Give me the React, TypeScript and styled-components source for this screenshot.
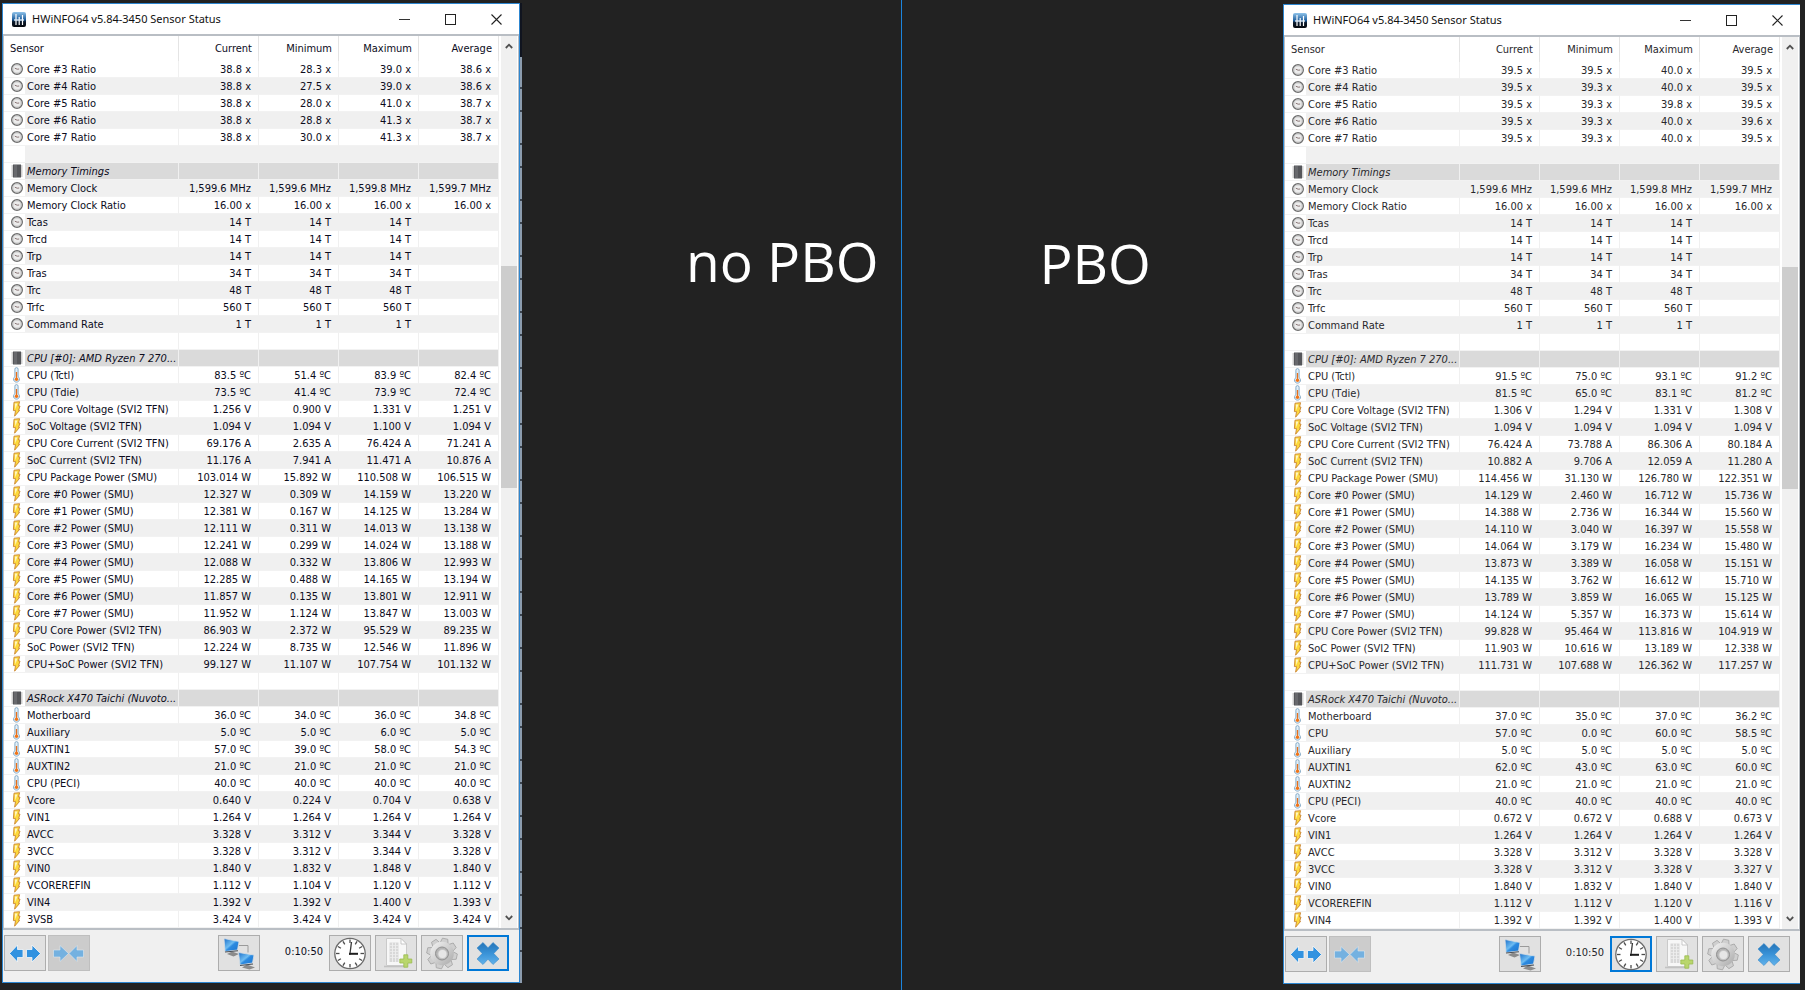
import React from 'react';
import styled, { createGlobalStyle, css } from 'styled-components';

const GlobalStyle = createGlobalStyle`
  *, *::before, *::after { box-sizing: border-box; }
  body { margin: 0; background: #222222; }
`;

/* ---------- data ---------- */

type Kind = 'clock' | 'temp' | 'volt';
type Row =
  | { type: 'blank' }
  | { type: 'section'; name: string }
  | { type: 'item'; kind: Kind; name: string; values: string[] };

const blank: Row = { type: 'blank' };
const section = (name: string): Row => ({ type: 'section', name });

/* Each line reads: name | current | minimum | maximum | average */
const items = (kind: Kind, unit: string, lines: string[]): Row[] =>
  lines.map((line) => {
    const [name, ...values] = line.split('|');
    return { type: 'item', kind, name, values: values.map((v) => (v ? `${v} ${unit}` : '')) };
  });

const timings: Row[] = items('clock', 'T', [
  'Tcas|14|14|14|',
  'Trcd|14|14|14|',
  'Trp|14|14|14|',
  'Tras|34|34|34|',
  'Trc|48|48|48|',
  'Trfc|560|560|560|',
  'Command Rate|1|1|1|',
]);

const memory: Row[] = [
  blank,
  section('Memory Timings'),
  ...items('clock', 'MHz', ['Memory Clock|1,599.6|1,599.6|1,599.8|1,599.7']),
  ...items('clock', 'x', ['Memory Clock Ratio|16.00|16.00|16.00|16.00']),
  ...timings,
  blank,
  section('CPU [#0]: AMD Ryzen 7 270...'),
];

const stockRows: Row[] = [
  ...items('clock', 'x', [
    'Core #3 Ratio|38.8|28.3|39.0|38.6',
    'Core #4 Ratio|38.8|27.5|39.0|38.6',
    'Core #5 Ratio|38.8|28.0|41.0|38.7',
    'Core #6 Ratio|38.8|28.8|41.3|38.7',
    'Core #7 Ratio|38.8|30.0|41.3|38.7',
  ]),
  ...memory,
  ...items('temp', 'ºC', ['CPU (Tctl)|83.5|51.4|83.9|82.4', 'CPU (Tdie)|73.5|41.4|73.9|72.4']),
  ...items('volt', 'V', [
    'CPU Core Voltage (SVI2 TFN)|1.256|0.900|1.331|1.251',
    'SoC Voltage (SVI2 TFN)|1.094|1.094|1.100|1.094',
  ]),
  ...items('volt', 'A', [
    'CPU Core Current (SVI2 TFN)|69.176|2.635|76.424|71.241',
    'SoC Current (SVI2 TFN)|11.176|7.941|11.471|10.876',
  ]),
  ...items('volt', 'W', [
    'CPU Package Power (SMU)|103.014|15.892|110.508|106.515',
    'Core #0 Power (SMU)|12.327|0.309|14.159|13.220',
    'Core #1 Power (SMU)|12.381|0.167|14.125|13.284',
    'Core #2 Power (SMU)|12.111|0.311|14.013|13.138',
    'Core #3 Power (SMU)|12.241|0.299|14.024|13.188',
    'Core #4 Power (SMU)|12.088|0.332|13.806|12.993',
    'Core #5 Power (SMU)|12.285|0.488|14.165|13.194',
    'Core #6 Power (SMU)|11.857|0.135|13.801|12.911',
    'Core #7 Power (SMU)|11.952|1.124|13.847|13.003',
    'CPU Core Power (SVI2 TFN)|86.903|2.372|95.529|89.235',
    'SoC Power (SVI2 TFN)|12.224|8.735|12.546|11.896',
    'CPU+SoC Power (SVI2 TFN)|99.127|11.107|107.754|101.132',
  ]),
  blank,
  section('ASRock X470 Taichi (Nuvoto...'),
  ...items('temp', 'ºC', [
    'Motherboard|36.0|34.0|36.0|34.8',
    'Auxiliary|5.0|5.0|6.0|5.0',
    'AUXTIN1|57.0|39.0|58.0|54.3',
    'AUXTIN2|21.0|21.0|21.0|21.0',
    'CPU (PECI)|40.0|40.0|40.0|40.0',
  ]),
  ...items('volt', 'V', [
    'Vcore|0.640|0.224|0.704|0.638',
    'VIN1|1.264|1.264|1.264|1.264',
    'AVCC|3.328|3.312|3.344|3.328',
    '3VCC|3.328|3.312|3.344|3.328',
    'VIN0|1.840|1.832|1.848|1.840',
    'VCOREREFIN|1.112|1.104|1.120|1.112',
    'VIN4|1.392|1.392|1.400|1.393',
    '3VSB|3.424|3.424|3.424|3.424',
  ]),
];

const boostRows: Row[] = [
  ...items('clock', 'x', [
    'Core #3 Ratio|39.5|39.5|40.0|39.5',
    'Core #4 Ratio|39.5|39.3|40.0|39.5',
    'Core #5 Ratio|39.5|39.3|39.8|39.5',
    'Core #6 Ratio|39.5|39.3|40.0|39.6',
    'Core #7 Ratio|39.5|39.3|40.0|39.5',
  ]),
  ...memory,
  ...items('temp', 'ºC', ['CPU (Tctl)|91.5|75.0|93.1|91.2', 'CPU (Tdie)|81.5|65.0|83.1|81.2']),
  ...items('volt', 'V', [
    'CPU Core Voltage (SVI2 TFN)|1.306|1.294|1.331|1.308',
    'SoC Voltage (SVI2 TFN)|1.094|1.094|1.094|1.094',
  ]),
  ...items('volt', 'A', [
    'CPU Core Current (SVI2 TFN)|76.424|73.788|86.306|80.184',
    'SoC Current (SVI2 TFN)|10.882|9.706|12.059|11.280',
  ]),
  ...items('volt', 'W', [
    'CPU Package Power (SMU)|114.456|31.130|126.780|122.351',
    'Core #0 Power (SMU)|14.129|2.460|16.712|15.736',
    'Core #1 Power (SMU)|14.388|2.736|16.344|15.560',
    'Core #2 Power (SMU)|14.110|3.040|16.397|15.558',
    'Core #3 Power (SMU)|14.064|3.179|16.234|15.480',
    'Core #4 Power (SMU)|13.873|3.389|16.058|15.151',
    'Core #5 Power (SMU)|14.135|3.762|16.612|15.710',
    'Core #6 Power (SMU)|13.789|3.859|16.065|15.125',
    'Core #7 Power (SMU)|14.124|5.357|16.373|15.614',
    'CPU Core Power (SVI2 TFN)|99.828|95.464|113.816|104.919',
    'SoC Power (SVI2 TFN)|11.903|10.616|13.189|12.338',
    'CPU+SoC Power (SVI2 TFN)|111.731|107.688|126.362|117.257',
  ]),
  blank,
  section('ASRock X470 Taichi (Nuvoto...'),
  ...items('temp', 'ºC', [
    'Motherboard|37.0|35.0|37.0|36.2',
    'CPU|57.0|0.0|60.0|58.5',
    'Auxiliary|5.0|5.0|5.0|5.0',
    'AUXTIN1|62.0|43.0|63.0|60.0',
    'AUXTIN2|21.0|21.0|21.0|21.0',
    'CPU (PECI)|40.0|40.0|40.0|40.0',
  ]),
  ...items('volt', 'V', [
    'Vcore|0.672|0.672|0.688|0.673',
    'VIN1|1.264|1.264|1.264|1.264',
    'AVCC|3.328|3.312|3.328|3.328',
    '3VCC|3.328|3.312|3.328|3.327',
    'VIN0|1.840|1.832|1.840|1.840',
    'VCOREREFIN|1.112|1.112|1.120|1.116',
    'VIN4|1.392|1.392|1.400|1.393',
  ]),
];

/* ---------- styled parts ---------- */

const Desktop = styled.main`
  display: flex;
  min-height: 100vh;
`;

const Half = styled.section<{ $side: 'left' | 'right' }>`
  flex: 1 1 0;
  display: flex;
  align-items: flex-start;
  ${(p) =>
    p.$side === 'left'
      ? css`padding: 3px 0 6px 2px;`
      : css`padding: 4px 5px 6px 0; border-left: 1px solid #1c84dc;`}
`;

const Caption = styled.h1<{ $side: 'left' | 'right' }>`
  flex: 1;
  margin: 0;
  font: 400 55px/74px 'Open Sans', 'Noto Sans', sans-serif;
  color: #ffffff;
  white-space: nowrap;
  ${(p) =>
    p.$side === 'left'
      ? css`text-align: right; padding: 221px 22px 0 0;`
      : css`text-align: left; padding: 222px 0 0 138px;`}
`;

const Crop = styled.div`
  flex: 0 0 517px;
  overflow: hidden;
`;

const Backdrop = styled.div`
  align-self: stretch;
  width: 2px;
  margin-bottom: 1px;
  display: flex;
  flex-direction: column;
  background: repeating-linear-gradient(#8c9cae 0 28px, #3a4450 28px 30px, #8c9cae 30px 51px, #3a4450 51px 53px, #8c9cae 53px 56px);
  &::before {
    content: '';
    height: 54px;
    background: #10141f;
  }
`;

const Frame = styled.article<{ $soft: boolean }>`
  width: 518px;
  background: #f0f0f0;
  border: 1px solid #2d86d0;
  font: 11px/16px 'DejaVu Sans Condensed', 'DejaVu Sans', sans-serif;
  color: ${(p) => (p.$soft ? '#28282c' : '#0c0c1c')};
  flex: none;
`;

const TitleBar = styled.header`
  display: flex;
  align-items: center;
  height: 30px;
  padding-left: 9px;
  background: #ffffff;
`;

const Title = styled.h2`
  flex: 1;
  margin: 0 0 0 6px;
  font: 400 11px/16px 'Noto Sans', 'Open Sans', sans-serif;
  color: #111111;
`;

const WindowButton = styled.button`
  width: 46px;
  height: 30px;
  padding: 0;
  border: 0;
  background: transparent;
  display: flex;
  align-items: center;
  justify-content: center;
`;

const List = styled.div`
  display: flex;
  background: #ffffff;
  border: solid #b9bec4;
  border-width: 2px 1px;
`;

const Grid = styled.table`
  flex: 1;
  width: 100%;
  table-layout: fixed;
  border-collapse: separate;
  border-spacing: 0;
`;

const HeadCell = styled.th<{ $first?: boolean }>`
  height: 25px;
  padding: ${(p) => (p.$first ? '0 0 0 6px' : '0 6px 0 0')};
  text-align: ${(p) => (p.$first ? 'left' : 'right')};
  font-weight: 400;
  border-right: 1px solid #e4e4e4;
`;

const Line = styled.tr<{ $tone: 'plain' | 'stripe' | 'section' }>`
  height: 17px;
  background: ${(p) => ({ plain: '#ffffff', stripe: '#f0f0f0', section: '#dadada' })[p.$tone]};
  font-style: ${(p) => (p.$tone === 'section' ? 'italic' : 'normal')};
`;

const cell = css`
  height: 17px;
  border-bottom: 1px solid #f2f2f2;
  white-space: nowrap;
`;

const IconCell = styled.td`
  ${cell}
  padding: 0 0 0 7px;
  background: #ffffff;
  & > svg { display: block; }
`;

const NameCell = styled.td`
  ${cell}
  padding: 2px 0 0 2px;
  line-height: 14px;
  border-right: 1px solid #f0f0f0;
`;

const ValueCell = styled.td`
  ${cell}
  padding: 2px 7px 0 0;
  line-height: 14px;
  text-align: right;
  border-right: 1px solid #f0f0f0;
`;

const Scrollbar = styled.div`
  flex: 0 0 16px;
  margin: 0 1px 0 2px;
  display: grid;
  grid-template-rows: 20px 210fr 222fr 420fr 20px;
  background: #f0f0f0;
`;

const ScrollArrow = styled.button<{ $end?: boolean }>`
  grid-row: ${(p) => (p.$end ? 5 : 1)};
  padding: 0;
  border: 0;
  background: transparent;
  display: flex;
  align-items: center;
  justify-content: center;
`;

const Thumb = styled.div`
  grid-row: 3;
  background: #cdcdcd;
`;

const Footer = styled.footer`
  display: flex;
  align-items: center;
  height: 52px;
  padding: 0 10px 6px 1px;
`;

const Group = styled.div<{ $gap: number; $end?: boolean }>`
  display: flex;
  align-items: center;
  gap: ${(p) => p.$gap}px;
  margin-left: ${(p) => (p.$end ? 'auto' : '0')};
`;

const Timer = styled.time`
  margin: 0 6px 2px 25px;
`;

const ToolButton = styled.button<{ $active?: boolean }>`
  width: 42px;
  height: 36px;
  padding: 0;
  border: 1px solid #adadad;
  background: #e1e1e1;
  display: flex;
  align-items: center;
  justify-content: center;
  ${(p) => p.$active && css`border: 2px solid #0078d7;`}
  &:disabled { background: #cccccc; border-color: #bfbfbf; }
  & > svg { flex: none; display: block; }
`;

/* ---------- drawings ---------- */

const RowIcon = ({ kind }: { kind: Kind | 'chip' }) => {
  if (kind === 'clock')
    return (
      <svg width="13" height="16" viewBox="0 0 13 16">
        <circle cx="6" cy="8" r="5.3" fill="#ececec" stroke="#6e6e6e" strokeWidth="1.4" />
        <circle cx="6" cy="8" r="4.1" fill="none" stroke="#c4c4c4" strokeWidth="1" />
        <path d="M3.8 7.2 6.2 8.2 8.2 8" fill="none" stroke="#8a7676" strokeWidth="1" />
      </svg>
    );
  if (kind === 'chip')
    return (
      <svg width="13" height="16" viewBox="0 0 13 16">
        <path d="M0.500 3h11M0.500 5h11M0.500 7h11M0.500 9h11M0.500 11h11M0.500 13h11" stroke="#a0a0a0" strokeWidth="1" />
        <rect x="2" y="1.5" width="8" height="13" fill="#55565a" />
        <path d="M3 2h3v12H3z" fill="#68696d" />
      </svg>
    );
  if (kind === 'temp')
    return (
      <svg width="13" height="16" viewBox="0 0 13 16">
        <path d="M3.900 2.200a1.600 1.600 0 0 1 3.200 0v7.400a3 3 0 1 1-3.200 0z" fill="#e4f0f8" stroke="#86abc8" strokeWidth="1" />
        <path d="M5.500 5v6" stroke="#e8701c" strokeWidth="1.300" />
        <circle cx="5.500" cy="12.200" r="1.700" fill="#f07418" />
      </svg>
    );
  return (
    <svg width="13" height="16" viewBox="0 0 13 16">
      <path d="M3 1.2 8.600.7 7.500 5H9L7.600 9.400h1L3.600 15.200 4.500 9.600H2.400z" fill="#fcd83c" stroke="#c98432" strokeWidth="0.900" strokeLinejoin="round" />
      <path d="M3.800 2.400h2.600L4.400 8.200z" fill="#fff6c4" />
    </svg>
  );
};

const AppIcon = () => (
  <svg width="14" height="15" viewBox="0 0 14 15">
    <defs>
      <linearGradient id="appFill" x1="0" y1="0" x2="0" y2="1">
        <stop offset="0" stopColor="#8fc3ea" />
        <stop offset="0.5" stopColor="#1f5f9e" />
        <stop offset="0.65" stopColor="#0b1a2c" />
        <stop offset="1" stopColor="#05080d" />
      </linearGradient>
    </defs>
    <rect width="14" height="15" rx="2" fill="url(#appFill)" />
    <path d="M4 2v11M7.200 5v8M10.500 3v10" stroke="#ffffff" strokeWidth="1.200" />
    <path d="M2 8h10" stroke="#e6f0f8" strokeWidth="1.300" />
  </svg>
);

const Arrows = ({ inward }: { inward?: boolean }) => (
  <svg width="40" height="34" viewBox="0 0 40 34">
    {inward ? (
      <g fill="#74b1e0" stroke="#dfe8ee" strokeWidth="0.6">
        <path d="M4.500 14h6.500v-4.500l8.500 8-8.500 8V21H4.500z" />
        <path d="M34.500 14h-6.500v-4.500l-8 8 8 8V21h6.500z" />
      </g>
    ) : (
      <g fill="#3192e0" stroke="#f6f6f6" strokeWidth="0.8">
        <path d="M18 13.500h-5.500v-4.500l-8 8.500 8 8.500v-4.500H18z" />
        <path d="M21.500 13.500H27v-4.500l8.500 8.500-8.500 8.500v-4.500h-5.500z" />
      </g>
    )}
  </svg>
);

const NetworkIcon = () => (
  <svg width="40" height="34" viewBox="0 0 40 34">
    <defs>
      <linearGradient id="screen" x1="0" y1="0" x2="1" y2="1">
        <stop offset="0" stopColor="#1c6fc9" />
        <stop offset="0.45" stopColor="#6dbcf2" />
        <stop offset="0.55" stopColor="#2c8ae0" />
        <stop offset="1" stopColor="#1b74cf" />
      </linearGradient>
    </defs>
    <path d="M20 9.500h9v7" fill="none" stroke="#9a9a9a" strokeWidth="1" />
    <path d="M8 18 13 15.500l7 2.500-5.500 2.500z" fill="#8b8b8b" />
    <path d="M5 2.500 20 5.500 18.500 14 6 15.500z" fill="url(#screen)" stroke="#d8dde2" strokeWidth="0.8" />
    <path d="M6 16 19 14.800" stroke="#4a4f55" strokeWidth="1.100" />
    <path d="M23 31.500 28 28.500l8 3-5.500 2z" fill="#8b8b8b" />
    <path d="M19.500 16.500 35 19 33.500 27 21 29z" fill="url(#screen)" stroke="#d8dde2" strokeWidth="0.8" />
    <path d="M21 29.500 34 28" stroke="#4a4f55" strokeWidth="1.100" />
  </svg>
);

const ClockIcon = () => (
  <svg width="40" height="34" viewBox="0 0 40 34">
    <circle cx="20" cy="17.500" r="15.200" fill="#ffffff" stroke="#6b6b6b" strokeWidth="1.300" />
    {Array.from({ length: 12 }, (_, i) => (
      <path key={i} d="M20 3.500v3.500" stroke="#4c4c4c" strokeWidth="1.300" transform={`rotate(${i * 30} 20 17.500)`} />
    ))}
    <path d="M19.800 19 21.500 6" stroke="#3a3a3a" strokeWidth="1.300" />
    <path d="M19 17.800h9" stroke="#1e1e1e" strokeWidth="2" />
  </svg>
);

const LogIcon = () => (
  <svg width="40" height="34" viewBox="0 0 40 34">
    <path d="M8 30.500h23" stroke="#c2c2c2" strokeWidth="1.600" />
    <path d="M10.500 2.500h14.500l5.500 5.500v21.500h-20z" fill="#f7f7f7" stroke="#cacaca" strokeWidth="1" />
    <path d="M25 2.500v5.500h5.500z" fill="#ffffff" stroke="#bdbdbd" strokeWidth="0.8" />
    <path d="M13.500 6.500h9v19.500h-9z" fill="#d8d8d8" />
    <path d="M16.500 6.500v19.500M19.500 6.500v19.500" stroke="#f2f2f2" strokeWidth="0.8" />
    <path d="M13.500 9.500h9M13.500 12.500h9M13.500 15.500h9M13.500 18.500h9M13.500 21.500h9" stroke="#eeeeee" strokeWidth="0.8" />
    <path d="M27.800 18.800h4v4.200h4v4h-4v4.200h-4V27h-4v-4h4z" fill="#b9d66c" stroke="#9abb50" strokeWidth="0.8" strokeLinejoin="round" />
  </svg>
);

const GearIcon = () => (
  <svg width="40" height="34" viewBox="0 0 40 34">
    <defs>
      <linearGradient id="steel" x1="0" y1="0" x2="1" y2="1">
        <stop offset="0" stopColor="#f4f4f4" />
        <stop offset="0.5" stopColor="#d0d0d0" />
        <stop offset="1" stopColor="#a8a8a8" />
      </linearGradient>
    </defs>
    <g fill="#cfcfcf" stroke="#a6a6a6" strokeWidth="0.8" strokeLinejoin="round">
      {Array.from({ length: 8 }, (_, i) => (
        <path key={i} d="M15.800 8 17.300 2.400h5.400L24.200 8z" transform={`rotate(${i * 45 + 12} 20 17.500)`} />
      ))}
    </g>
    <circle cx="20" cy="17.500" r="11.800" fill="url(#steel)" />
    <circle cx="20" cy="17.500" r="6.500" fill="#b4b4b4" stroke="#909090" strokeWidth="1" />
    <circle cx="20.500" cy="18" r="4.600" fill="#e6e6e6" stroke="#c4c4c4" strokeWidth="1" />
  </svg>
);

const CloseIcon = ({ id }: { id: string }) => (
  <svg width="40" height="34" viewBox="0 0 40 34">
    <defs>
      <linearGradient id={id} x1="0" y1="0" x2="0" y2="1">
        <stop offset="0" stopColor="#2474b8" />
        <stop offset="0.5" stopColor="#3a93d8" />
        <stop offset="1" stopColor="#62b2ea" />
      </linearGradient>
    </defs>
    <path
      d="M15 6.500 20 11.800 25 6.500 31 12 25.800 17.500 31 23 25 28.500 20 23.200 15 28.500 9 23 14.200 17.500 9 12z"
      fill={`url(#${id})`}
      stroke="#3d8bc9"
      strokeWidth="0.6"
      strokeLinejoin="round"
    />
  </svg>
);

const Chevron = ({ down }: { down?: boolean }) => (
  <svg width="8" height="6" viewBox="0 0 8 6">
    <path d={down ? 'M.8 1 4 4.300 7.200 1' : 'M.8 5 4 1.700 7.200 5'} fill="none" stroke="#505050" strokeWidth="1.800" />
  </svg>
);

/* ---------- window ---------- */

const columns = ['Current', 'Minimum', 'Maximum', 'Average'];

interface SensorWindowProps {
  id: string;
  rows: Row[];
  focused: 'clock' | 'close';
  soft?: boolean;
}

const SensorWindow = ({ id, rows, focused, soft = false }: SensorWindowProps) => (
  <Frame $soft={soft}>
    <TitleBar>
      <AppIcon />
      <Title>HWiNFO64 v5.84-3450 Sensor Status</Title>
      <WindowButton aria-label="Minimize">
        <svg width="11" height="11" viewBox="0 0 11 11"><path d="M0 5.500h11" stroke="#333" /></svg>
      </WindowButton>
      <WindowButton aria-label="Maximize">
        <svg width="11" height="11" viewBox="0 0 11 11"><rect x="0.500" y="0.500" width="10" height="10" fill="none" stroke="#222" /></svg>
      </WindowButton>
      <WindowButton aria-label="Close">
        <svg width="11" height="11" viewBox="0 0 11 11"><path d="M.5.5l10 10M10.500.5l-10 10" stroke="#222" strokeWidth="1.100" /></svg>
      </WindowButton>
    </TitleBar>

    <List>
      <Grid>
        <colgroup>
          <col width="21" />
          <col />
          {columns.map((c) => <col key={c} width="80" />)}
        </colgroup>
        <thead>
          <tr>
            <HeadCell $first colSpan={2}>Sensor</HeadCell>
            {columns.map((c) => <HeadCell key={c}>{c}</HeadCell>)}
          </tr>
        </thead>
        <tbody>
          {rows.map((row, i) => (
            <Line key={i} $tone={row.type === 'section' ? 'section' : i % 2 ? 'stripe' : 'plain'}>
              <IconCell>
                {row.type === 'section' && <RowIcon kind="chip" />}
                {row.type === 'item' && <RowIcon kind={row.kind} />}
              </IconCell>
              <NameCell>{row.type !== 'blank' && row.name}</NameCell>
              {columns.map((c, n) => (
                <ValueCell key={c}>{row.type === 'item' && row.values[n]}</ValueCell>
              ))}
            </Line>
          ))}
        </tbody>
      </Grid>
      <Scrollbar>
        <ScrollArrow aria-label="Scroll up"><Chevron /></ScrollArrow>
        <Thumb />
        <ScrollArrow aria-label="Scroll down" $end><Chevron down /></ScrollArrow>
      </Scrollbar>
    </List>

    <Footer>
      <Group $gap={2}>
        <ToolButton aria-label="Expand columns"><Arrows /></ToolButton>
        <ToolButton aria-label="Shrink columns" disabled><Arrows inward /></ToolButton>
      </Group>
      <Group $gap={0} $end>
        <ToolButton aria-label="Remote sensors"><NetworkIcon /></ToolButton>
        <Timer>0:10:50</Timer>
      </Group>
      <Group $gap={4}>
        <ToolButton aria-label="Reset clock" $active={focused === 'clock'}><ClockIcon /></ToolButton>
        <ToolButton aria-label="Log sensors"><LogIcon /></ToolButton>
        <ToolButton aria-label="Settings"><GearIcon /></ToolButton>
        <ToolButton aria-label="Close sensors" $active={focused === 'close'}><CloseIcon id={id} /></ToolButton>
      </Group>
    </Footer>
  </Frame>
);

export default function App() {
  return (
    <>
      <GlobalStyle />
      <Desktop>
        <Half $side="left">
          <SensorWindow id="stock" rows={stockRows} focused="close" />
          <Backdrop />
          <Caption $side="left">no PBO</Caption>
        </Half>
        <Half $side="right">
          <Caption $side="right">PBO</Caption>
          <Crop>
            <SensorWindow id="boost" rows={boostRows} focused="clock" soft />
          </Crop>
        </Half>
      </Desktop>
    </>
  );
}
